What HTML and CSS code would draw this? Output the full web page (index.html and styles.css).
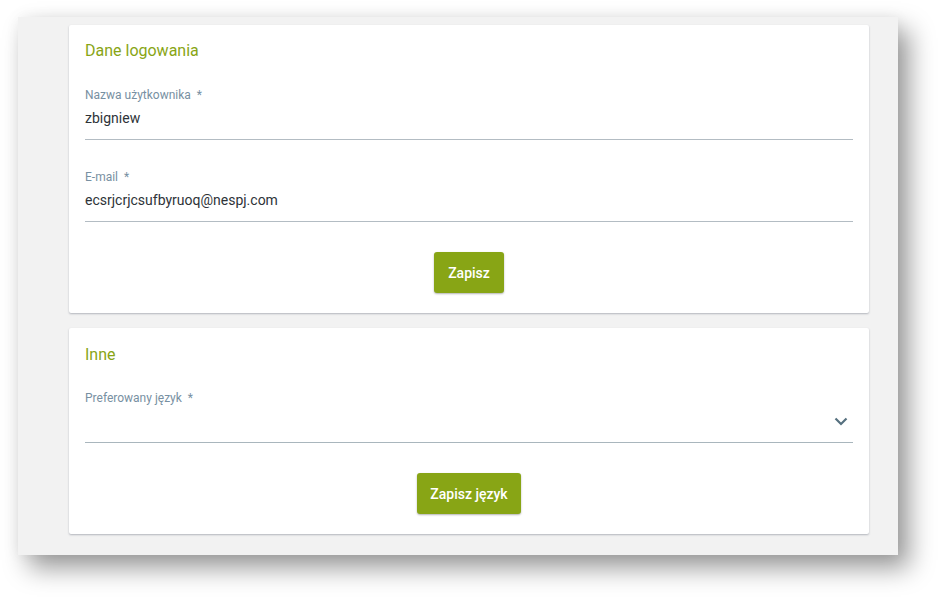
FILE: index.html
```html
<!DOCTYPE html>
<html lang="pl">
<head>
<meta charset="utf-8">
<title>Profil</title>
<link rel="stylesheet" href="styles.css">
</head>
<body>
<div class="window">
  <main class="content">
    <section class="card card-login">
      <h2 class="card-title">Dane logowania</h2>
      <div class="field">
        <label class="field-label">Nazwa użytkownika&nbsp; *</label>
        <div class="field-input">zbigniew</div>
      </div>
      <div class="field field-second">
        <label class="field-label">E-mail&nbsp; *</label>
        <div class="field-input">ecsrjcrjcsufbyruoq@nespj.com</div>
      </div>
      <div class="actions">
        <button class="btn btn-save">Zapisz</button>
      </div>
    </section>
    <section class="card card-other">
      <h2 class="card-title">Inne</h2>
      <div class="field">
        <label class="field-label">Preferowany język&nbsp; *</label>
        <div class="field-input field-select">
          <span></span>
          <svg class="chevron" width="14" height="9" viewBox="0 0 14 9"><path d="M1.5 1.5 L7 7 L12.5 1.5" fill="none" stroke="#56707f" stroke-width="2.2"/></svg>
        </div>
      </div>
      <div class="actions">
        <button class="btn btn-lang">Zapisz język</button>
      </div>
    </section>
  </main>
</div>
</body>
</html>
```
FILE: styles.css
```css
html, body {
  margin: 0;
  padding: 0;
  background: #ffffff;
  font-family: Roboto, "Liberation Sans", Arial, sans-serif;
}
body {
  width: 946px;
  height: 603px;
  overflow: hidden;
}
.window {
  margin: 17px 0 0 18px;
  width: 880px;
  height: 538px;
  background: #f2f2f2;
  box-shadow: 11px 13px 24px rgba(0, 0, 0, 0.4), 0 0 14px rgba(0, 0, 0, 0.05);
  box-sizing: border-box;
  padding: 8px 29px 0 51px;
}
.content {
  display: flex;
  flex-direction: column;
  gap: 15px;
}
.card {
  background: #ffffff;
  border-radius: 2px;
  box-shadow: 0 1px 2px rgba(60, 70, 90, 0.35);
  padding: 16px 16px 20px 16px;
}
.card-other {
  padding-top: 17px;
}
.card-title {
  margin: 0;
  font-size: 16px;
  line-height: 20px;
  font-weight: 400;
  color: #88a515;
}
.field {
  margin-top: 26px;
}
.card-other .field {
  margin-top: 25px;
}
.field-second {
  margin-top: 29px;
}
.field-label {
  display: block;
  font-size: 12px;
  line-height: 16px;
  color: #7890a2;
}
.field-input {
  margin-top: 5px;
  font-size: 14px;
  line-height: 20px;
  color: #2e3338;
  padding-bottom: 11px;
  border-bottom: 1px solid #b3bcc3;
}
.field-second .field-input {
  margin-top: 5px;
  padding-bottom: 11px;
}
.field-select {
  display: flex;
  justify-content: space-between;
  align-items: center;
  height: 20px;
  margin-top: 5px;
  padding-bottom: 11px;
  border-bottom-color: #a9b6bd;
}
.chevron {
  margin-right: 5px;
  margin-top: 1px;
}
.actions {
  display: flex;
  justify-content: center;
  margin-top: 30px;
}
.btn {
  font-family: Roboto, "Liberation Sans", Arial, sans-serif;
  font-size: 14px;
  font-weight: 500;
  color: #ffffff;
  background: #88a515;
  border: none;
  border-radius: 3px;
  height: 41px;
  padding: 0 14px;
  box-shadow: 0 1px 2px rgba(0, 0, 0, 0.3);
}
.btn-lang {
  padding: 0 13px;
}
```
